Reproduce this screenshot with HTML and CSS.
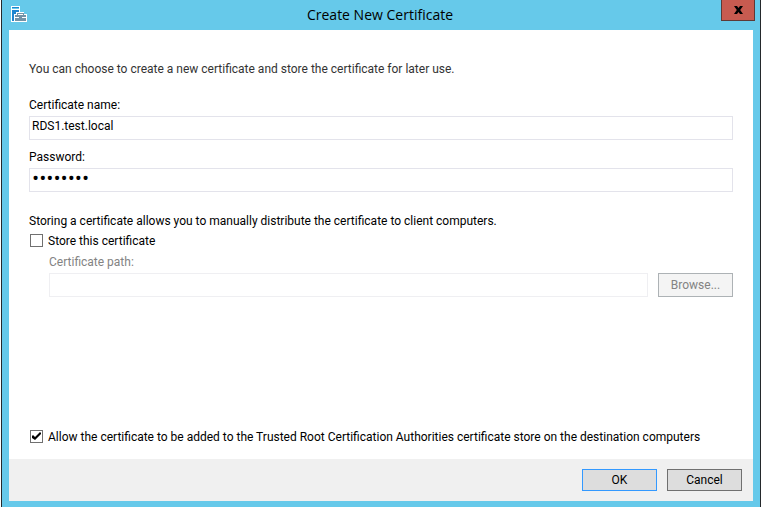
FILE: index.html
```html
<!DOCTYPE html>
<html lang="en">
<head>
<meta charset="utf-8">
<title>Create New Certificate</title>
<link rel="stylesheet" href="styles.css">
</head>
<body>
<form class="window">
  <header class="titlebar">
    <svg class="app-icon" viewBox="0 0 16 16" width="16" height="16" aria-hidden="true" shape-rendering="crispEdges">
      <path fill="#fff" d="M0 0h9v6h4v2h3v8H0z"/>
      <path fill="#1f86d0" d="M1 1h7v1H1zM1 4h7v2H5v2H3v7H1z"/>
      <path fill="#66c9ea" d="M1 2h7v1H1z"/>
      <path fill="#7393a7" d="M6 7h7v2h2v2h-4v1h4v3H4v-3h4v-1H4V9h2zM7 8v1h5V8z"/>
    </svg>
    <h1 class="title">Create New Certificate</h1>
    <button class="close" type="button" aria-label="Close">
      <svg viewBox="0 0 9 8" width="9" height="8" aria-hidden="true"><path fill="#000" d="M0 0h3l1.500 2L6 0h3L6.200 4 9 8H6L4.500 6 3 8H0l2.800-4z"/></svg>
    </button>
  </header>
  <main class="content">
    <p class="intro">You can choose to create a new certificate and store the certificate for later use.</p>
    <div class="field">
      <label for="name">Certificate name:</label>
      <input class="textbox" id="name" type="text" value="RDS1.test.local">
    </div>
    <div class="field">
      <label for="password">Password:</label>
      <input class="textbox" id="password" type="password" value="password">
    </div>
    <section class="storage">
      <p>Storing a certificate allows you to manually distribute the certificate to client computers.</p>
      <label class="check"><input type="checkbox">Store this certificate</label>
      <div class="field path">
        <label for="path">Certificate path:</label>
        <div class="path-row">
          <input class="textbox" id="path" type="text" disabled>
          <button class="button" type="button" disabled>Browse...</button>
        </div>
      </div>
    </section>
    <label class="check trust"><input type="checkbox" checked>Allow the certificate to be added to the Trusted Root Certification Authorities certificate store on the destination computers</label>
  </main>
  <footer class="actions">
    <button class="button primary" type="button">OK</button>
    <button class="button" type="button">Cancel</button>
  </footer>
</form>
</body>
</html>
```
FILE: styles.css
```css
* { box-sizing: border-box; }
body {
  margin: 0;
  padding: 0 1px;
  background: #fff;
  color: #000;
  font: 12px/16px Roboto, "Open Sans", sans-serif;
}
button, input { font: inherit; color: inherit; }
p, h1 { margin: 0; }
.window {
  display: flex;
  flex-direction: column;
  min-height: 100vh;
  padding: 0 7px 6px;
  border: solid #24292c;
  border-width: 0 1px;
  background: #66c9ea;
}
.titlebar {
  display: grid;
  grid-template-columns: 30px 1fr 34px;
  align-items: start;
  height: 30px;
  margin: 0 -2px 0 0;
}
.app-icon { margin: 6px 0 0 2px; }
.title {
  align-self: center;
  text-align: center;
  font-family: "Open Sans", sans-serif;
  font-size: 14px;
  font-weight: 400;
  line-height: 20px;
}
.close {
  display: grid;
  place-items: center;
  height: 21px;
  padding: 0;
  border: 1px solid #5e3936;
  border-top: 0;
  background: #c75b50;
}
.content {
  flex: 1;
  display: flex;
  flex-direction: column;
  padding: 31px 20px 14px;
  background: #fff;
}
.intro { margin-bottom: 20px; color: #333; }
.field {
  display: flex;
  flex-direction: column;
  gap: 3px;
  margin-bottom: 9px;
}
.textbox {
  width: 100%;
  height: 24px;
  padding: 0 2px 4px;
  border: 1px solid #e3e3eb;
  background: #fff;
}
.textbox[type="password"] {
  font-family: "Open Sans", sans-serif;
  font-size: 19px;
}
.storage { margin-top: 12px; }
.check {
  display: flex;
  align-items: flex-start;
  gap: 5px;
  margin-top: 4px;
}
.check input {
  appearance: none;
  flex: none;
  width: 13px;
  height: 13px;
  margin: 1px 0 0 1px;
  border: 1px solid #707070;
  background: #fff;
}
.check input:checked {
  background: url("data:image/svg+xml,%3Csvg xmlns='http://www.w3.org/2000/svg' viewBox='0 0 11 11'%3E%3Cpath d='M1 5l1-1 2 2 5-5 1 1v1L4 9 1 7z'/%3E%3C/svg%3E") center / 11px 11px no-repeat;
}
.path { margin: 5px 0 20px 20px; color: #838383; }
.path-row { display: flex; gap: 10px; }
.path-row .textbox { flex: 1; width: auto; min-width: 0; border-color: #efeff2; }
.path-row .button { height: 24px; }
.trust { margin-top: auto; }
.button {
  width: 75px;
  height: 22px;
  padding: 0;
  border: 1px solid #707070;
  background: #ddd;
}
.button:disabled { border-color: #adb2b5; background: #f4f4f4; color: #838383; }
.primary { border-color: #3399ff; }
.actions {
  display: flex;
  justify-content: flex-end;
  gap: 10px;
  padding: 10px 11px;
  background: #f0f0f0;
}
```
